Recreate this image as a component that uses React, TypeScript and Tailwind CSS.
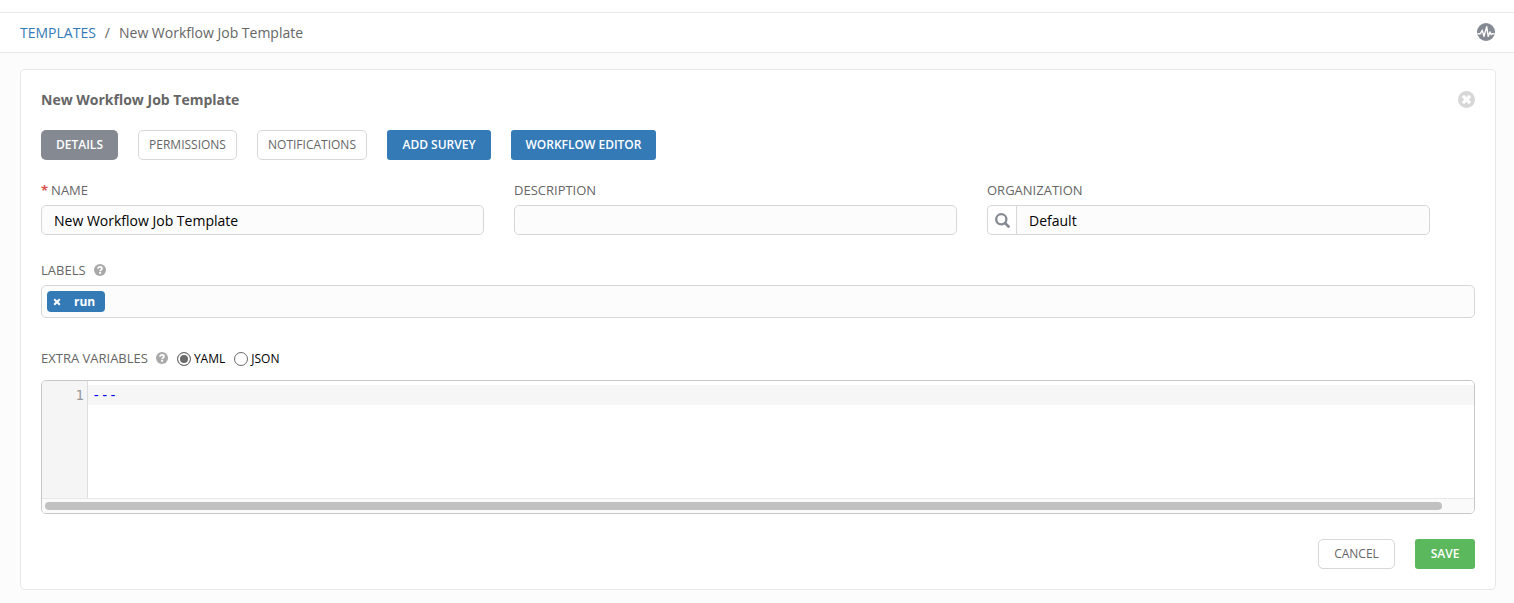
import { useState } from "react";

const ActivityIcon = () => (
  <svg viewBox="0 0 18 18" className="size-[18px]" aria-hidden="true">
    <circle cx="9" cy="9" r="9" fill="#848992" />
    <path
      d="M0.5 10.8H3.4L5.2 7.2L7 13.4L9.7 3.6L11.2 13.4L13 9L14.2 11.6L15.2 10.8H17.5"
      fill="none"
      stroke="#fff"
      strokeWidth="1.4"
      strokeLinejoin="round"
    />
  </svg>
);

const CloseIcon = () => (
  <svg viewBox="0 0 17 17" className="size-[17px]" aria-hidden="true">
    <circle cx="8.5" cy="8.5" r="8.5" fill="#d7d7d7" />
    <path d="M4.9 4.9L12.1 12.1M12.1 4.9L4.9 12.1" stroke="#fff" strokeWidth="3.2" />
  </svg>
);

const SearchIcon = () => (
  <svg viewBox="0 0 15 15" className="size-[15px]" aria-hidden="true">
    <circle cx="6.3" cy="6.3" r="5.1" fill="none" stroke="#848992" strokeWidth="2.3" />
    <path d="M10.1 10.1L13.5 13.5" stroke="#848992" strokeWidth="2.7" strokeLinecap="round" />
  </svg>
);

const HelpButton = ({ label }: { label: string }) => (
  <button type="button" aria-label={label} className="cursor-pointer">
    <svg viewBox="0 0 12 12" className="size-3" aria-hidden="true">
      <circle cx="6" cy="6" r="6" fill="#a9a9a9" />
      <path
        d="M4 4.7C4.1 3.5 4.9 2.9 6 2.9C7.2 2.9 8 3.5 8 4.5C8 5.7 6.2 5.6 6.2 7.2"
        fill="none"
        stroke="#fff"
        strokeWidth="1.7"
      />
      <rect x="5.2" y="8" width="1.9" height="1.8" fill="#fff" />
    </svg>
  </button>
);

const labelStyle = "text-[13px] leading-5 text-[#666]";
const inputStyle =
  "h-[30px] w-full min-w-0 border border-[#d7d7d7] bg-[#fcfcfc] px-3 text-sm text-black";
const outlineButton =
  "h-[30px] rounded-[5px] border border-[#d7d7d7] bg-white text-xs text-[#666] cursor-pointer";
const solidButton = "h-[30px] text-xs font-semibold text-white cursor-pointer";
const radioStyle =
  "size-3.5 appearance-none rounded-full border border-[#6b6b6b] bg-white checked:bg-[#6b6b6b] checked:shadow-[inset_0_0_0_2px_#fff]";

const App = () => {
  const [name, setName] = useState("New Workflow Job Template");
  const [description, setDescription] = useState("");
  const [organization, setOrganization] = useState("Default");
  const [labels, setLabels] = useState(["run"]);
  const [format, setFormat] = useState("yaml");
  const [variables, setVariables] = useState("---");

  return (
    <div className="min-h-screen bg-[#fcfcfc] pb-3 font-['Open_Sans','Noto_Sans',sans-serif]">
      <div className="h-3 bg-white" />
      <header className="flex h-[41px] items-center justify-between border-y border-[#e8e8e8] bg-white pr-[19px] pl-5">
        <nav aria-label="Breadcrumb" className="flex gap-[9px] text-sm text-[#666]">
          <a href="#templates" className="text-[#337ab7]">
            TEMPLATES
          </a>
          <span>/</span>
          <span>New Workflow Job Template</span>
        </nav>
        <button type="button" aria-label="Activity stream" className="cursor-pointer pb-px">
          <ActivityIcon />
        </button>
      </header>

      <main className="mt-4 mr-[18px] ml-5 rounded-[5px] border border-[#e8e8e8] bg-white p-5">
        <div className="flex h-5 items-center justify-between">
          <h1 className="text-sm font-bold text-[#666]">New Workflow Job Template</h1>
          <button type="button" aria-label="Close" className="cursor-pointer pb-px">
            <CloseIcon />
          </button>
        </div>

        <div className="mt-5 flex gap-5">
          <button type="button" className={`${solidButton} w-[77px] rounded-[5px] bg-[#848992]`}>
            DETAILS
          </button>
          <button type="button" className={`${outlineButton} w-[99px]`}>
            PERMISSIONS
          </button>
          <button type="button" className={`${outlineButton} w-[110px]`}>
            NOTIFICATIONS
          </button>
          <button type="button" className={`${solidButton} w-[104px] rounded-[3px] bg-[#337ab7]`}>
            ADD SURVEY
          </button>
          <button type="button" className={`${solidButton} w-[145px] rounded-[3px] bg-[#337ab7]`}>
            WORKFLOW EDITOR
          </button>
        </div>

        <form onSubmit={(e) => e.preventDefault()}>
          <div className="mt-5 grid grid-cols-3 gap-[30px] pr-[45px]">
            <div className="flex flex-col gap-[5px]">
              <label htmlFor="name" className={labelStyle}>
                <span className="mr-[3px] font-bold text-[#d9534f]">*</span>NAME
              </label>
              <input
                type="text"
                id="name"
                value={name}
                onChange={(e) => setName(e.target.value)}
                className={`${inputStyle} rounded-[5px]`}
              />
            </div>
            <div className="flex flex-col gap-[5px]">
              <label htmlFor="description" className={labelStyle}>
                DESCRIPTION
              </label>
              <input
                type="text"
                id="description"
                value={description}
                onChange={(e) => setDescription(e.target.value)}
                className={`${inputStyle} rounded-[5px]`}
              />
            </div>
            <div className="flex flex-col gap-[5px]">
              <label htmlFor="organization" className={labelStyle}>
                ORGANIZATION
              </label>
              <div className="flex">
                <button
                  type="button"
                  aria-label="Look up organization"
                  className="flex h-[30px] w-[29px] shrink-0 cursor-pointer items-center justify-center rounded-l-[5px] border border-r-0 border-[#d7d7d7] bg-white"
                >
                  <SearchIcon />
                </button>
                <input
                  type="text"
                  id="organization"
                  value={organization}
                  onChange={(e) => setOrganization(e.target.value)}
                  className={`${inputStyle} rounded-r-[5px]`}
                />
              </div>
            </div>
          </div>

          <div className="mt-[25px]">
            <div className="flex items-center gap-2">
              <label htmlFor="labels" className={labelStyle}>
                LABELS
              </label>
              <HelpButton label="About labels" />
            </div>
            <div className="mt-[5px] flex h-[33px] items-center gap-1 rounded-[5px] border border-[#d7d7d7] bg-[#fcfcfc] px-[5px]">
              {labels.map((item) => (
                <span
                  key={item}
                  className="flex h-[21px] items-center rounded bg-[#337ab7] pr-2.5 pl-1.5 text-xs font-bold text-white"
                >
                  <button
                    type="button"
                    aria-label={`Remove ${item}`}
                    onClick={() => setLabels(labels.filter((l) => l !== item))}
                    className="mr-[13px] cursor-pointer"
                  >
                    <svg viewBox="0 0 8 8" className="size-2" aria-hidden="true">
                      <path d="M1.2 1.2L6.8 6.8M6.8 1.2L1.2 6.8" stroke="#fff" strokeWidth="2" />
                    </svg>
                  </button>
                  {item}
                </span>
              ))}
              <input type="text" id="labels" className="h-6 min-w-0 flex-1 text-sm outline-none" />
            </div>
          </div>

          <div className="mt-[30px] flex h-5 items-center">
            <label htmlFor="variables" className={labelStyle}>
              EXTRA VARIABLES
            </label>
            <div className="ml-2 flex">
              <HelpButton label="About extra variables" />
            </div>
            <label className="ml-[9px] flex items-center gap-[3px] pt-0.5 text-xs text-black">
              <input
                type="radio"
                name="format"
                checked={format === "yaml"}
                onChange={() => setFormat("yaml")}
                className={radioStyle}
              />
              YAML
            </label>
            <label className="ml-[9px] flex items-center gap-[3px] pt-0.5 text-xs text-black">
              <input
                type="radio"
                name="format"
                checked={format === "json"}
                onChange={() => setFormat("json")}
                className={radioStyle}
              />
              JSON
            </label>
          </div>

          <div className="mt-3 overflow-hidden rounded-[5px] border border-[#c8c8c8] font-['DejaVu_Sans_Mono',monospace] text-sm leading-5">
            <div className="flex h-[117px]">
              <div className="w-[46px] shrink-0 border-r border-[#ddd] bg-[#f5f5f5] pt-1 pr-[3px] text-right text-[#999]">
                1
              </div>
              <textarea
                id="variables"
                wrap="off"
                spellCheck={false}
                value={variables}
                onChange={(e) => setVariables(e.target.value)}
                className="block flex-1 resize-none overflow-hidden bg-[linear-gradient(#fff_4px,#f6f6f6_4px,#f6f6f6_24px,#fff_24px)] px-1 pt-1 text-[#0000ff] outline-none"
              />
            </div>
            <div className="h-[15px] border-t border-[#e8e8e8] bg-[#fafafa] pt-[3px] pr-8 pl-[3px]">
              <div className="h-2 rounded-full bg-[#c1c1c1]" />
            </div>
          </div>

          <div className="mt-[25px] flex justify-end gap-5">
            <button type="button" className={`${outlineButton} w-[77px]`}>
              CANCEL
            </button>
            <button type="submit" className={`${solidButton} w-[60px] rounded-[3px] bg-[#5cb85c]`}>
              SAVE
            </button>
          </div>
        </form>
      </main>
    </div>
  );
};

export default App;
